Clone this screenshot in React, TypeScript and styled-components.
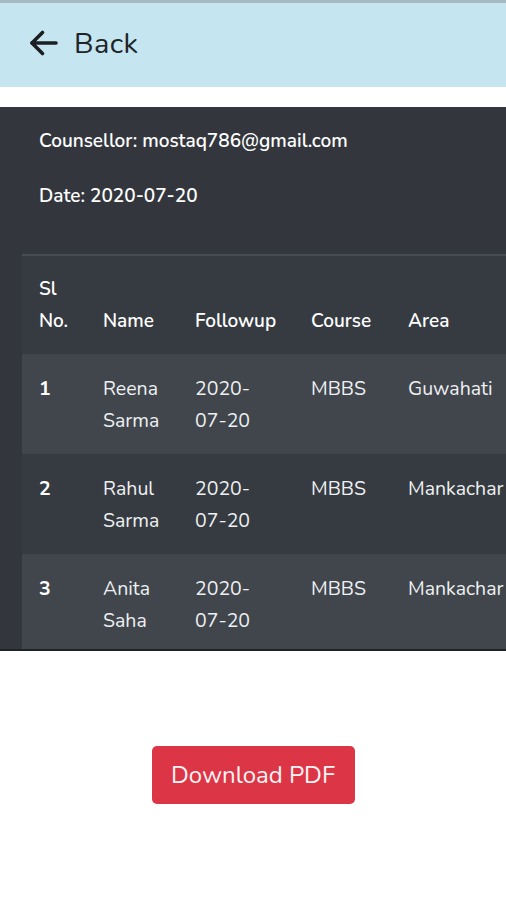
import React from 'react';
import styled, { createGlobalStyle } from 'styled-components';

const GlobalStyle = createGlobalStyle`
  html, body {
    margin: 0;
    padding: 0;
    background: #ffffff;
    font-family: "Nunito", Lato, "Noto Sans", sans-serif;
    overflow: hidden;
  }
`;

const Page = styled.div`
  width: 506px;
  height: 900px;
  display: flex;
  flex-direction: column;
  overflow: hidden;
`;

const TopStrip = styled.div`
  height: 3px;
  background: #a6bac6;
`;

const Header = styled.header`
  height: 84px;
  box-sizing: border-box;
  padding: 0 0 4px 26px;
  background: #c5e6f0;
  display: flex;
  align-items: center;
  gap: 12px;
  color: #202428;
`;

const BackLabel = styled.span`
  font-size: 29px;
  font-weight: 400;
  letter-spacing: 0.4px;
`;

const Panel = styled.section`
  margin-top: 20px;
  background: #33373d;
  padding-left: 22px;
  height: 544px;
  overflow: hidden;
  border-bottom: 2px solid #1f2226;
  box-sizing: border-box;
`;

const Info = styled.div`
  padding: 22px 0 0 17px;
  height: 147px;
  box-sizing: border-box;
  display: flex;
  flex-direction: column;
  gap: 30px;
`;

const InfoLine = styled.div`
  color: #ffffff;
  font-size: 19px;
  font-weight: 600;
  line-height: 25px;
`;

const Table = styled.table`
  border-collapse: collapse;
  table-layout: fixed;
  width: 543px;
  background: #363b41;
  border-top: 2px solid #464c53;
`;

const Th = styled.th<{ $w: number }>`
  width: ${p => p.$w}px;
  text-align: left;
  vertical-align: bottom;
  padding: 17px;
  color: #ffffff;
  font-size: 19px;
  font-weight: 600;
  line-height: 32px;
`;

const Tr = styled.tr<{ $striped?: boolean }>`
  height: 100px;
  background: ${p => (p.$striped ? '#41464d' : 'transparent')};
`;

const Td = styled.td`
  vertical-align: top;
  padding: 19px 17px 17px 17px;
  color: #eef0f2;
  font-size: 19.5px;
  line-height: 32px;
`;

const NowrapTd = styled(Td)`
  white-space: nowrap;
`;

const Strong = styled(Td)`
  font-weight: 700;
  color: #ffffff;
`;

const Keep = styled.span`
  white-space: nowrap;
`;

const Footer = styled.div`
  display: flex;
  justify-content: center;
  padding-top: 95px;
`;

const Button = styled.button`
  width: 203px;
  height: 58px;
  background: #dc3545;
  color: #fff4f5;
  border: none;
  border-radius: 5px;
  font-family: inherit;
  font-size: 24px;
  cursor: pointer;
`;

const rows = [
  { n: '1', first: 'Reena', last: 'Sarma', area: 'Guwahati' },
  { n: '2', first: 'Rahul', last: 'Sarma', area: 'Mankachar' },
  { n: '3', first: 'Anita', last: 'Saha', area: 'Mankachar' },
];

const ArrowLeft = () => (
  <svg width="36" height="36" viewBox="0 0 24 24" fill="none" stroke="#1c1f22" strokeWidth="2.4" strokeLinecap="round" strokeLinejoin="round">
    <path d="M20 12H4" />
    <path d="M11 5l-7 7 7 7" />
  </svg>
);

export default function App() {
  return (
    <Page>
      <GlobalStyle />
      <TopStrip />
      <Header>
        <ArrowLeft />
        <BackLabel>Back</BackLabel>
      </Header>
      <Panel>
        <Info>
          <InfoLine>Counsellor: mostaq786@gmail.com</InfoLine>
          <InfoLine>Date: 2020-07-20</InfoLine>
        </Info>
        <Table>
          <thead>
            <tr>
              <Th $w={30}>Sl No.</Th>
              <Th $w={58}>Name</Th>
              <Th $w={82}>Followup</Th>
              <Th $w={63}>Course</Th>
              <Th $w={140}>Area</Th>
            </tr>
          </thead>
          <tbody>
            {rows.map((r, i) => (
              <Tr key={r.n} $striped={i % 2 === 0}>
                <Strong>{r.n}</Strong>
                <Td>{r.first} {r.last}</Td>
                <Td>2020-<wbr /><Keep>07-20</Keep></Td>
                <Td>MBBS</Td>
                <NowrapTd>{r.area}</NowrapTd>
              </Tr>
            ))}
          </tbody>
        </Table>
      </Panel>
      <Footer>
        <Button>Download PDF</Button>
      </Footer>
    </Page>
  );
}
